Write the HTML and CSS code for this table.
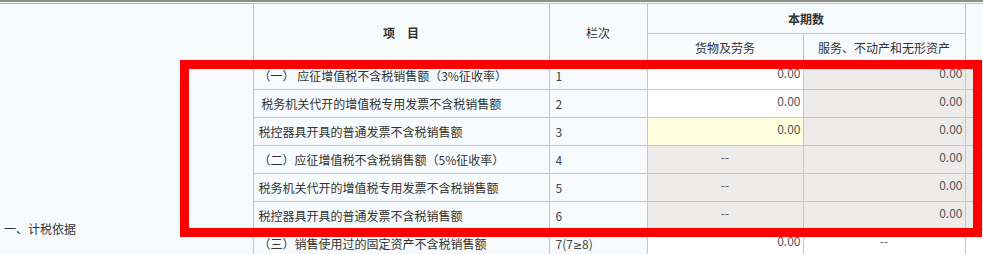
FILE: index.html
```html
<!DOCTYPE html>
<html>

<head>
	<meta charset="UTF-8">
	<title>增值税纳税申报表</title>
	<link rel="stylesheet" href="styles.css">
</head>

<body>
	<div class="sheet">
		<table class="report">
			<colgroup>
				<col class="c-group">
				<col class="c-item">
				<col class="c-line">
				<col class="c-goods">
				<col class="c-service">
				<col class="c-year">
			</colgroup>
			<tr class="head-top">
				<td class="group" rowspan="16">一、计税依据</td>
				<th rowspan="2" class="strong">项　目</th>
				<th rowspan="2">栏次</th>
				<th colspan="2" class="strong">本期数</th>
				<th rowspan="2" class="strong">本年累计</th>
			</tr>
			<tr class="head-sub">
				<th>货物及劳务</th>
				<th>服务、不动产和无形资产</th>
			</tr>
			<tr>
				<td class="item">（一） 应征增值税不含税销售额（3%征收率）</td>
				<td class="line">1</td>
				<td class="num"><span>0.00</span></td>
				<td class="num off"><span>0.00</span></td>
				<td class="num off"></td>
			</tr>
			<tr>
				<td class="item">&nbsp;税务机关代开的增值税专用发票不含税销售额</td>
				<td class="line">2</td>
				<td class="num"><span>0.00</span></td>
				<td class="num off"><span>0.00</span></td>
				<td class="num off"></td>
			</tr>
			<tr>
				<td class="item">税控器具开具的普通发票不含税销售额</td>
				<td class="line">3</td>
				<td class="num edit"><span>0.00</span></td>
				<td class="num off"><span>0.00</span></td>
				<td class="num off"></td>
			</tr>
			<tr>
				<td class="item">（二）应征增值税不含税销售额（5%征收率）</td>
				<td class="line">4</td>
				<td class="num off dash"><span>--</span></td>
				<td class="num off"><span>0.00</span></td>
				<td class="num off"></td>
			</tr>
			<tr>
				<td class="item">税务机关代开的增值税专用发票不含税销售额</td>
				<td class="line">5</td>
				<td class="num off dash"><span>--</span></td>
				<td class="num off"><span>0.00</span></td>
				<td class="num off"></td>
			</tr>
			<tr>
				<td class="item">税控器具开具的普通发票不含税销售额</td>
				<td class="line">6</td>
				<td class="num off dash"><span>--</span></td>
				<td class="num off"><span>0.00</span></td>
				<td class="num off"></td>
			</tr>
			<tr>
				<td class="item">（三）销售使用过的固定资产不含税销售额</td>
				<td class="line">7(7<span class="sym">≥</span>8)</td>
				<td class="num"><span>0.00</span></td>
				<td class="num dash"><span>--</span></td>
				<td class="num"></td>
			</tr>
			<tr>
				<td class="item">其中：税控器具开具的普通发票不含税销售额</td>
				<td class="line">8</td>
				<td class="num"><span>0.00</span></td>
				<td class="num dash"><span>--</span></td>
				<td class="num"></td>
			</tr>
			<tr>
				<td class="item">（四）免税销售额</td>
				<td class="line">9=10+11+12</td>
				<td class="num"><span>0.00</span></td>
				<td class="num"><span>0.00</span></td>
				<td class="num"></td>
			</tr>
			<tr>
				<td class="item">其中：小微企业免税销售额</td>
				<td class="line">10</td>
				<td class="num"><span>0.00</span></td>
				<td class="num"><span>0.00</span></td>
				<td class="num"></td>
			</tr>
			<tr>
				<td class="item">未达起征点销售额</td>
				<td class="line">11</td>
				<td class="num"><span>0.00</span></td>
				<td class="num"><span>0.00</span></td>
				<td class="num"></td>
			</tr>
			<tr>
				<td class="item">其他免税销售额</td>
				<td class="line">12</td>
				<td class="num"><span>0.00</span></td>
				<td class="num"><span>0.00</span></td>
				<td class="num"></td>
			</tr>
			<tr>
				<td class="item">（五）出口免税销售额</td>
				<td class="line">13(13<span class="sym">≥</span>14)</td>
				<td class="num"><span>0.00</span></td>
				<td class="num"><span>0.00</span></td>
				<td class="num"></td>
			</tr>
			<tr>
				<td class="item">其中：税控器具开具的普通发票销售额</td>
				<td class="line">14</td>
				<td class="num"><span>0.00</span></td>
				<td class="num"><span>0.00</span></td>
				<td class="num"></td>
			</tr>
		</table>
		<div class="mark"></div>
	</div>
</body>

</html>
```

FILE: styles.css
```css
html,
body {
	margin: 0;
	padding: 0;
	width: 100%;
	height: 100%;
	overflow: hidden;
	background: #f7fbfd;
	font-family: "Microsoft YaHei", "Noto Sans CJK SC", sans-serif;
	font-size: 12px;
	color: #333;
}

.sheet {
	position: relative;
	border-top: 2px solid #8e8e82;
	padding-top: 1px;
	background: #f7fbfd;
}

.report {
	border-collapse: collapse;
	table-layout: fixed;
	width: 1165px;
	border-top: 1px solid #b4b4b0;
}

.c-group {
	width: 253px;
}

.c-item {
	width: 296px;
}

.c-line {
	width: 98px;
}

.c-goods {
	width: 156px;
}

.c-service {
	width: 162px;
}

.c-year {
	width: 200px;
}

.report th,
.report td {
	border: 1px solid #c6c6c6;
	padding: 0;
	white-space: nowrap;
	overflow: hidden;
	box-sizing: border-box;
}

.report th {
	font-weight: normal;
	text-align: center;
	color: #333;
}

.report th.strong {
	font-weight: bold;
}

.report tr {
	height: 28px;
}

.report tr.head-top {
	height: 30px;
}

.report .group {
	border-left: none;
	border-top: none;
	padding-left: 4px;
	vertical-align: middle;
	color: #333;
}

.report .item {
	padding-left: 5px;
	color: #333;
}

.report .line {
	padding-left: 6px;
	color: #444;
}

.report .line .sym {
	font-family: "DejaVu Sans", sans-serif;
	font-size: 11px;
}

.report .num {
	background: #fff;
	text-align: right;
	vertical-align: top;
	padding: 2px 2px 0 0;
	line-height: 18px;
	color: #555;
}

.report .num.edit {
	background: #ffffe0;
}

.report .num.off {
	background: #eeebeb;
}

.report .num.dash {
	text-align: center;
	padding-right: 0;
}

/* red outline drawn over the first six rows */
.mark {
	position: absolute;
	left: 180px;
	top: 58px;
	width: 802px;
	height: 177px;
	box-sizing: border-box;
	border: 9px solid #ff0000;
	pointer-events: none;
}
```
